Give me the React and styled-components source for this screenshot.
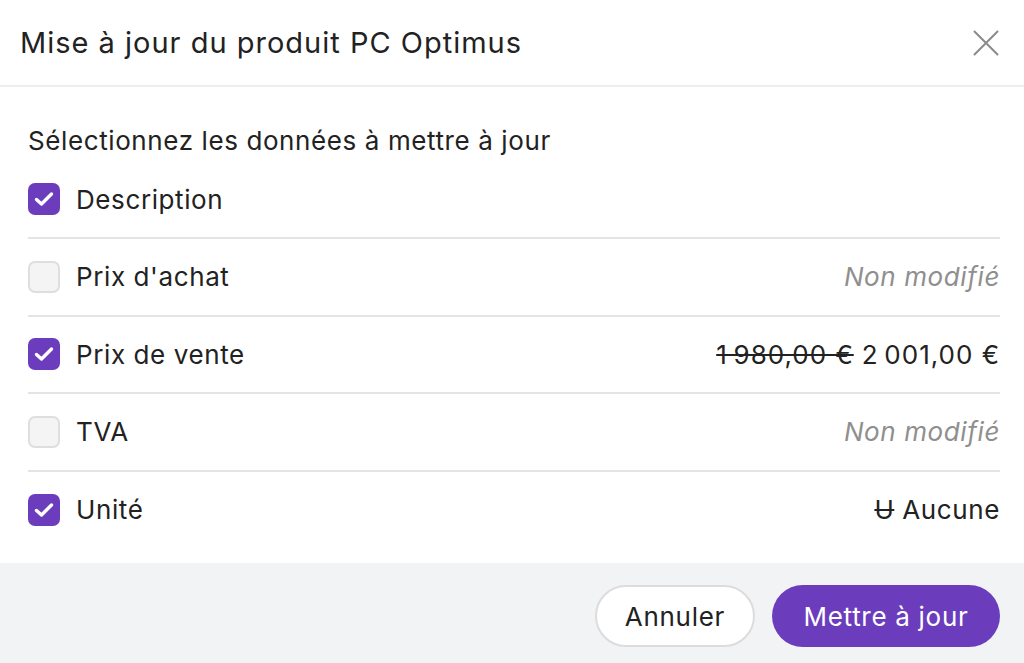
import React from 'react';
import styled, { createGlobalStyle } from 'styled-components';

const GlobalStyle = createGlobalStyle`
    html, body {
        margin: 0;
        padding: 0;
        background: #ffffff;
    }
    body {
        font-family: Inter, "Liberation Sans", Arial, sans-serif;
        color: #222222;
    }
`;

const Dialog = styled.div`
    width: 1024px;
    height: 663px;
    display: flex;
    flex-direction: column;
    background: #ffffff;
    overflow: hidden;
`;

const Header = styled.div`
    height: 85px;
    display: flex;
    align-items: center;
    justify-content: space-between;
    padding: 0 24px 0 20px;
    border-bottom: 2px solid #eeeeee;
`;

const Title = styled.h1`
    margin: 0;
    font-size: 29px;
    letter-spacing: 1px;
    font-weight: 400;
    color: #222222;
`;

const CloseButton = styled.button`
    background: none;
    border: none;
    padding: 0;
    width: 28px;
    height: 28px;
    display: flex;
    align-items: center;
    justify-content: center;
    cursor: pointer;
`;

const Body = styled.div`
    flex: 1;
    padding: 40px 24px 0 28px;
    font-size: 26px;
    letter-spacing: 0.6px;
`;

const Intro = styled.p`
    margin: 0 0 12px;
    line-height: 28px;
    color: #222222;
`;

const Row = styled.div`
    display: flex;
    align-items: center;
    justify-content: space-between;
    height: 75.6px;
    border-top: 2px solid #e4e4e4;
    &:first-of-type {
        border-top: none;
        height: 54px;
        align-items: flex-start;
        padding-top: 16px;
    }
`;

const Label = styled.label`
    display: flex;
    align-items: center;
    gap: 16px;
    color: #222222;
`;

const Box = styled.span`
    width: 32px;
    height: 32px;
    box-sizing: border-box;
    border-radius: 7px;
    display: flex;
    align-items: center;
    justify-content: center;
    background: ${(p) => (p.$checked ? '#6b3dbd' : '#f4f4f4')};
    border: ${(p) => (p.$checked ? 'none' : '2px solid #dedede')};
`;

const Value = styled.span`
    display: inline-flex;
    align-items: baseline;
    gap: 8px;
    color: #222222;
    letter-spacing: ${(p) => (p.$numeric ? '1px' : '0.6px')};
`;

const Muted = styled.span`
    font-style: italic;
    color: #8f8f8f;
`;

const Old = styled.s``;

const Footer = styled.div`
    height: 100px;
    box-sizing: border-box;
    padding: 6px 24px 0;
    background: #f2f3f5;
    display: flex;
    align-items: center;
    justify-content: flex-end;
    gap: 17px;
`;

const Button = styled.button`
    height: 62px;
    padding: 0 28px;
    border-radius: 31px;
    font-family: Inter, "Liberation Sans", Arial, sans-serif;
    font-size: 26px;
    letter-spacing: 0.7px;
    cursor: pointer;
    background: ${(p) => (p.$primary ? '#6b3dbd' : '#ffffff')};
    color: ${(p) => (p.$primary ? '#ffffff' : '#222222')};
    border: ${(p) => (p.$primary ? 'none' : '2px solid #dcdcdc')};
    min-width: ${(p) => (p.$primary ? '228px' : '160px')};
`;

const Check = ({ checked }) => (
    <Box $checked={checked}>
        {checked && (
            <svg width="22" height="22" viewBox="0 0 22 22" fill="none">
                <path d="M3.5 11.5l5 4.5 10-10" stroke="#fff" strokeWidth="3.4" strokeLinecap="round" strokeLinejoin="round" />
            </svg>
        )}
    </Box>
);

const rows = [
    { label: 'Description', checked: true },
    { label: "Prix d'achat", checked: false, muted: 'Non modifié' },
    { label: 'Prix de vente', checked: true, numeric: true, old: '1\u2009980,00\u00a0€', value: '2\u2009001,00\u00a0€' },
    { label: 'TVA', checked: false, muted: 'Non modifié' },
    { label: 'Unité', checked: true, old: 'U', value: 'Aucune' },
];

const App = () => {
    return (
        <>
            <GlobalStyle />
            <Dialog>
                <Header>
                    <Title>Mise à jour du produit PC Optimus</Title>
                    <CloseButton aria-label="Fermer">
                        <svg width="26" height="26" viewBox="0 0 26 26">
                            <path d="M1.5 1.5L24.5 24.5M24.5 1.5L1.5 24.5" stroke="#8a8a8a" strokeWidth="2" strokeLinecap="round" />
                        </svg>
                    </CloseButton>
                </Header>
                <Body>
                    <Intro>Sélectionnez les données à mettre à jour</Intro>
                    {rows.map((r) => (
                        <Row key={r.label}>
                            <Label>
                                <Check checked={r.checked} />
                                {r.label}
                            </Label>
                            {r.muted && <Muted>{r.muted}</Muted>}
                            {r.value && (
                                <Value $numeric={r.numeric}>
                                    <Old>{r.old}</Old>
                                    <span>{r.value}</span>
                                </Value>
                            )}
                        </Row>
                    ))}
                </Body>
                <Footer>
                    <Button>Annuler</Button>
                    <Button $primary>Mettre à jour</Button>
                </Footer>
            </Dialog>
        </>
    );
};

export default App;
